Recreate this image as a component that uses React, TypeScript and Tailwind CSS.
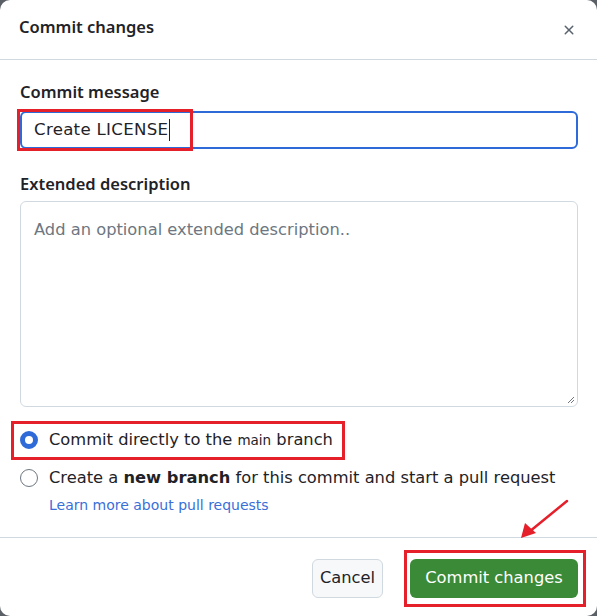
import React from "react";

function Radio({ checked }: { checked?: boolean }) {
  return checked ? (
    <span className="box-border flex h-[18px] w-[18px] shrink-0 rounded-full border-[5px] border-[#2f6bd8] bg-white" />
  ) : (
    <span className="box-border flex h-[18px] w-[18px] shrink-0 rounded-full border border-[#6e7781] bg-white" />
  );
}

const heading = { fontFamily: '"Noto Sans", "Open Sans", sans-serif' };

export default function App() {
  return (
    <div
      className="h-[616px] w-[597px] bg-[#5b5f66] text-[#1f2328]"
      style={{ fontFamily: '"DejaVu Sans", Verdana, sans-serif' }}
    >
      <div className="relative flex h-full w-full flex-col rounded-[10px] bg-white">
        {/* header */}
        <div className="flex h-[60px] items-center justify-between border-b border-[#d1d9e0] pb-1 pl-[19px] pr-[20px]">
          <h2 className="text-[16.5px] font-semibold" style={heading}>
            Commit changes
          </h2>
          <svg width="16" height="16" viewBox="0 0 16 16" className="mt-1 text-[#59636e]">
            <path
              d="M3.72 3.72a.75.75 0 0 1 1.06 0L8 6.94l3.22-3.22a.75.75 0 1 1 1.06 1.06L9.06 8l3.22 3.22a.75.75 0 1 1-1.06 1.06L8 9.06l-3.22 3.22a.75.75 0 0 1-1.06-1.06L6.94 8 3.72 4.78a.75.75 0 0 1 0-1.06Z"
              fill="currentColor"
            />
          </svg>
        </div>

        {/* body */}
        <div className="flex flex-col pl-5 pr-[19px] pt-[20px]">
          <label className="text-[16.5px] font-semibold leading-6" style={heading}>
            Commit message
          </label>
          <div className="relative mt-[7px]">
            <div className="flex h-[38px] items-center rounded-[6px] border-2 border-[#2f6bd8] px-[12px] text-[16.6px] tracking-[0.3px]">
              Create LICENSE
              <span className="ml-px h-[22px] w-px bg-[#1f2328]" />
            </div>
            <span className="pointer-events-none absolute -left-[3px] -top-[2px] h-[42px] w-[176px] border-[3px] border-[#e5202b]" />
          </div>

          <label className="mt-[23px] text-[16.5px] font-semibold leading-6" style={heading}>
            Extended description
          </label>
          <div className="relative mt-[5px] h-[206px] rounded-[6px] border border-[#d1d9e0] px-[13px] pt-[16px] text-[16.3px] text-[#6e7781]">
            Add an optional extended description..
            <svg width="8" height="8" viewBox="0 0 8 8" className="absolute bottom-[2px] right-[2px]">
              <path d="M7 1 1 7M7 4 4 7" stroke="#6e7781" strokeWidth="1" />
            </svg>
          </div>

          <div className="relative mt-[21px] flex h-6 items-center gap-[11px] text-[16.3px]">
            <Radio checked />
            <span>
              Commit directly to the <span className="text-[13.5px]">main</span> branch
            </span>
            <span className="pointer-events-none absolute -left-[9px] -top-[7px] h-[39px] w-[334px] border-[3px] border-[#e5202b]" />
          </div>

          <div className="mt-[14px] flex h-6 items-center gap-[11px] text-[16.3px]">
            <Radio />
            <span>
              Create a <b className="font-bold">new branch</b> for this commit and start a pull request
            </span>
          </div>
          <a className="ml-[29px] mt-[5px] text-[14px] leading-5 text-[#3a6fd8]">Learn more about pull requests</a>
        </div>

        {/* footer */}
        <div className="mt-[22px] flex justify-end gap-[27px] border-t border-[#d1d9e0] pr-[19px] pt-[21px]">
          <button className="h-[39px] w-[71px] rounded-[6px] border border-[#d1d9e0] bg-[#f6f8fa] text-[16.3px]">
            Cancel
          </button>
          <div className="relative">
            <button className="h-[39px] w-[168px] rounded-[6px] bg-[#3b8a38] text-[16.3px] text-white">
              Commit changes
            </button>
            <span className="pointer-events-none absolute -left-[6px] -top-[9px] h-[57px] w-[182px] border-[3px] border-[#e5202b]" />
          </div>
        </div>

        {/* annotation arrow */}
        <svg
          width="60"
          height="50"
          viewBox="0 0 60 50"
          className="pointer-events-none absolute left-[515px] top-[495px]"
        >
          <path d="M52 6 L14 37" stroke="#e5202b" strokeWidth="2.5" strokeLinecap="round" />
          <path d="M6 43 L10 28 L21 38 Z" fill="#e5202b" />
        </svg>
      </div>
    </div>
  );
}
